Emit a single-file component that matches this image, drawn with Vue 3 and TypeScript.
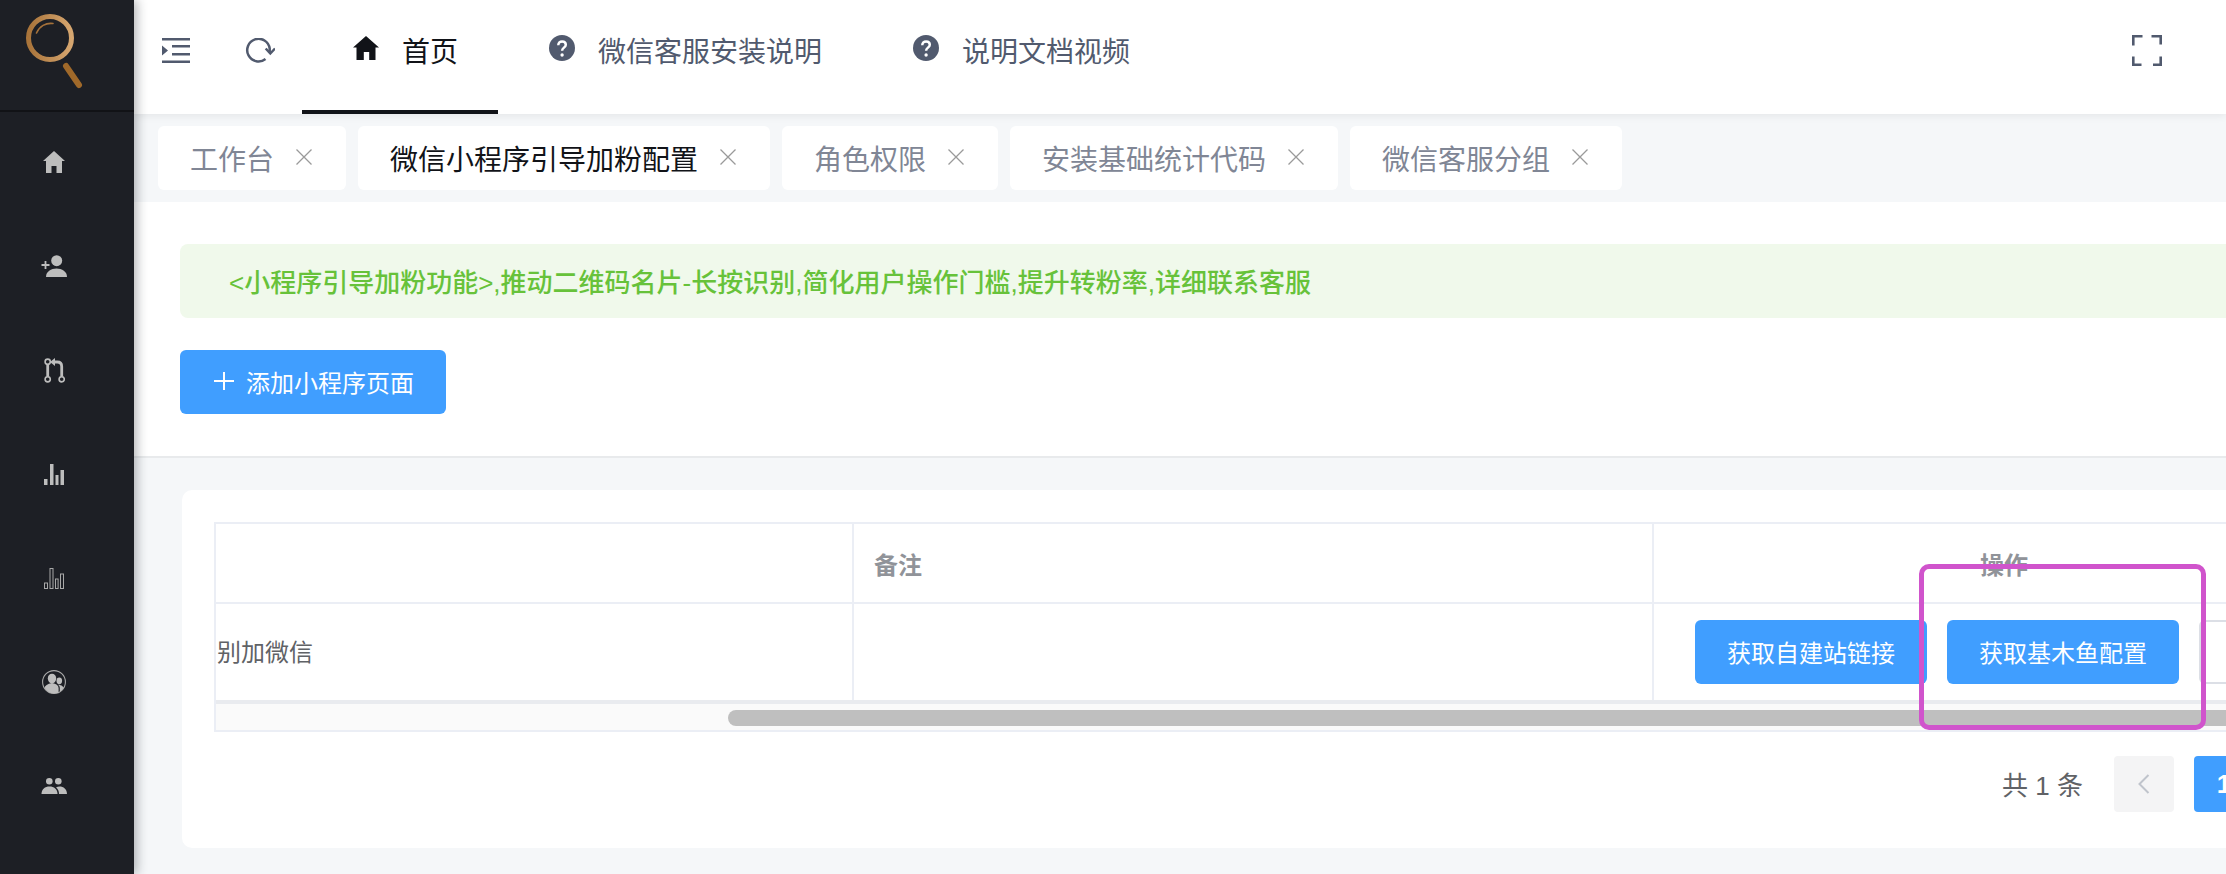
<script setup lang="ts">
interface Tab { label: string; active?: boolean }
const tabs: Tab[] = [
  { label: '工作台' },
  { label: '微信小程序引导加粉配置', active: true },
  { label: '角色权限' },
  { label: '安装基础统计代码' },
  { label: '微信客服分组' },
]
const helpNav: string[] = ['微信客服安装说明', '说明文档视频']
</script>

<template>
  <div class="page">
    <aside class="sidebar">
      <div class="logo">
        <svg width="64" height="80" viewBox="0 0 64 80" fill="none">
          <defs>
            <linearGradient id="ring" x1="0" y1="0" x2="1" y2="0">
              <stop offset="0" stop-color="#a9743a" />
              <stop offset="1" stop-color="#d6a670" />
            </linearGradient>
          </defs>
          <circle cx="28" cy="28" r="21.5" stroke="url(#ring)" stroke-width="5" />
          <path d="M14.5 23A15.5 15.5 0 0 1 31 13.5" stroke="#a5713a" stroke-width="1.6" stroke-linecap="round" />
          <path d="M44 56L57 75" stroke="#a0692a" stroke-width="6" stroke-linecap="round" />
        </svg>
      </div>
      <nav class="menu">
        <div class="menu-item">
          <svg width="22" height="22" viewBox="0 0 22 22"><path class="ic" d="M11 0L22 10h-3v12h-5.500v-7h-5v7H3V10H0z" /></svg>
        </div>
        <div class="menu-item">
          <svg width="26" height="22" viewBox="0 0 26 22">
            <circle class="ic" cx="15.700" cy="5.700" r="5.500" />
            <path class="ic" d="M5 22c0-5.500 5-8.500 10.500-8.500S26 16.500 26 22z" />
            <path d="M.5 10h8M4.500 6v8" stroke="#bdbdbd" stroke-width="1.800" fill="none" />
          </svg>
        </div>
        <div class="menu-item">
          <svg width="21" height="25" viewBox="0 0 21 25" fill="none" stroke="#bdbdbd">
            <circle cx="3.700" cy="3.700" r="2.600" stroke-width="1.600" />
            <circle cx="3.700" cy="21.300" r="2.600" stroke-width="1.600" />
            <circle cx="17.700" cy="21.300" r="2.600" stroke-width="1.600" />
            <path d="M3.700 6.300v12.400" stroke-width="2.800" />
            <path d="M17.700 18.700V8.500q0-4.500-4.500-4.500H10" stroke-width="2.800" />
            <path class="ic" stroke="none" d="M11 0v8L6 4z" />
          </svg>
        </div>
        <div class="menu-item">
          <svg width="20" height="21" viewBox="0 0 20 21">
            <rect class="ic" x="0" y="15" width="3.500" height="6" />
            <rect class="ic" x="6" y="0" width="3.500" height="21" />
            <rect class="ic" x="11.500" y="11" width="3" height="10" />
            <rect class="ic" x="16.500" y="6" width="3.500" height="15" />
          </svg>
        </div>
        <div class="menu-item">
          <svg width="20" height="21" viewBox="0 0 20 21" fill="none" stroke="#a8a8a8" stroke-width="1">
            <rect x=".5" y="15" width="3" height="5.500" />
            <rect x="6" y=".5" width="3" height="20" />
            <rect x="11.500" y="11" width="2.600" height="9.500" />
            <rect x="16.500" y="6" width="3" height="14.500" />
          </svg>
        </div>
        <div class="menu-item">
          <svg width="24" height="24" viewBox="0 0 24 24">
            <circle cx="12" cy="12" r="11.400" fill="none" stroke="#a8a8a8" stroke-width="1.100" />
            <ellipse class="ic" cx="10" cy="8.500" rx="4.200" ry="4.800" />
            <path class="ic" d="M2.600 18q.4-3.700 7.400-5 6.500 1 6.600 5v4.800q-2.200.7-4.600.7-5.800 0-9.400-5.500z" />
            <ellipse class="ic" cx="17.300" cy="10.800" rx="2.800" ry="3.400" />
            <path class="ic" d="M16 14.800q3.600-.4 5.800 2.700-1.500 2.800-4 4.300v-4q0-1.800-1.800-3z" />
          </svg>
        </div>
        <div class="menu-item">
          <svg width="26" height="16" viewBox="0 0 26 16">
            <circle class="ic" cx="8.300" cy="3.300" r="3.300" />
            <circle class="ic" cx="17.300" cy="3.300" r="3.300" />
            <path class="ic" d="M.5 16c0-5 3.500-7.500 8-7.500s8 2.500 8 7.500z" />
            <path class="ic" d="M18 16c0-3-1-5-3-6.500 1-.6 2.300-1 3.500-1 4 0 7.500 2.500 7.500 7.500z" />
          </svg>
        </div>
      </nav>
    </aside>

    <main class="main">
      <header class="topbar">
        <div class="tools">
          <svg width="28" height="25" viewBox="0 0 28 25" class="tool-menu">
            <path class="tool" d="M0 0h28v2.500H0zM10 7h18v2.500H10zM10 15h18v2.500H10zM0 22.500h28V25H0zM0 7.500l6 5-6 5z" />
          </svg>
          <svg width="30" height="25" viewBox="0 0 30 25" fill="none" stroke="#515a6e" stroke-width="2.500" class="tool-refresh">
            <path d="M20.500 21A11.300 11.300 0 1 1 24.700 10.500V15" />
            <path d="M20.700 10.500L25.300 15.500L30 10.500" />
          </svg>
        </div>
        <div class="nav-item active">
          <svg width="26" height="24" viewBox="0 0 26 24" class="nav-home"><path fill="#111318" d="M13 0l13 11.500h-3.500V24h-6.300v-8h-5.400v8H3.500V11.500H0z" /></svg>
          <span>首页</span>
        </div>
        <div v-for="item in helpNav" :key="item" class="nav-item">
          <svg width="26" height="26" viewBox="0 0 26 26" class="nav-help">
            <circle cx="13" cy="13" r="13" fill="#515a6e" />
            <path d="M9.300 10.300c0-2.400 1.600-3.900 3.800-3.900 2.200 0 3.700 1.400 3.700 3.300 0 2.900-3.700 3-3.700 6" fill="none" stroke="#fff" stroke-width="2.500" />
            <circle cx="13.100" cy="20" r="1.700" fill="#fff" />
          </svg>
          <span>{{ item }}</span>
        </div>
        <svg width="30" height="31" viewBox="0 0 30 31" fill="none" stroke="#515a6e" stroke-width="2.600" class="fullscreen">
          <path d="M1.300 10.500V1.300H10.500M19.500 1.300h9.200V9.500M1.300 21.500v8.200H9.500M28.700 21.500v8.200H21" />
        </svg>
      </header>

      <div class="tabs">
        <div v-for="tab in tabs" :key="tab.label" class="tab" :class="{ 'tab-active': tab.active }">
          <span>{{ tab.label }}</span>
          <svg width="16" height="16" viewBox="0 0 16 16" class="tab-close">
            <path d="M.5.500l15 15M15.500.5l-15 15" stroke="#9a9a9a" stroke-width="1.300" fill="none" />
          </svg>
        </div>
      </div>

      <section class="intro">
        <div class="alert">&lt;小程序引导加粉功能&gt;,推动二维码名片-长按识别,简化用户操作门槛,提升转粉率,详细联系客服</div>
        <button class="btn btn-add">
          <svg width="24" height="24" viewBox="0 0 24 24"><path d="M12 3v18M2 12h20" stroke="#fff" stroke-width="2" fill="none" /></svg>
          <span>添加小程序页面</span>
        </button>
      </section>

      <section class="card">
        <div class="table-wrap">
          <table class="table">
            <colgroup>
              <col class="col-a" />
              <col class="col-b" />
              <col class="col-c" />
            </colgroup>
            <thead>
              <tr>
                <th></th>
                <th class="th-note">备注</th>
                <th class="th-op">操作</th>
              </tr>
            </thead>
            <tbody>
              <tr>
                <td class="td-name">别加微信</td>
                <td></td>
                <td class="td-op">
                  <div class="ops">
                    <button class="btn btn-op">获取自建站链接</button>
                    <button class="btn btn-op">获取基木鱼配置</button>
                    <div class="btn-plain"></div>
                  </div>
                </td>
              </tr>
            </tbody>
          </table>
          <div class="scroll-track"><div class="scroll-thumb"></div></div>
        </div>
        <div class="pager">
          <span class="total">共 1 条</span>
          <span class="pg pg-disabled">
            <svg width="12" height="20" viewBox="0 0 12 20"><path d="M10.500 1L1.500 10l9 9" fill="none" stroke="#c0c4cc" stroke-width="2" /></svg>
          </span>
          <span class="pg pg-current">1</span>
          <span class="pg pg-disabled">
            <svg width="12" height="20" viewBox="0 0 12 20"><path d="M1.500 1l9 9-9 9" fill="none" stroke="#c0c4cc" stroke-width="2" /></svg>
          </span>
        </div>
      </section>
    </main>

    <div class="annotation"></div>
  </div>
</template>

<style>
html, body { margin: 0; overflow: hidden; }
</style>

<style scoped>
.page {
  position: relative;
  display: flex;
  width: 2226px;
  height: 874px;
  overflow: hidden;
  background: #f5f7f9;
  font-family: "Liberation Sans", "Noto Sans CJK SC", sans-serif;
}
.sidebar {
  position: relative;
  z-index: 3;
  flex: 0 0 134px;
  background: #1d1f25;
  box-shadow: 3px 0 10px rgba(29, 35, 41, 0.32);
}
.logo {
  box-sizing: border-box;
  height: 110px;
  padding: 10px 0 0 22px;
  box-shadow: 0 2px 0 #111216;
}
.logo svg { display: block; }
.menu { width: 108px; }
.menu-item {
  display: flex;
  align-items: center;
  justify-content: center;
  height: 104px;
}
.ic { fill: #bdbdbd; }
.main {
  flex: 1;
  min-width: 0;
  overflow: hidden;
}
.topbar {
  position: relative;
  z-index: 2;
  box-sizing: border-box;
  display: flex;
  height: 114px;
  background: #fff;
  box-shadow: 0 2px 8px rgba(0, 0, 0, 0.07);
}
.tools {
  display: flex;
  align-items: flex-start;
  flex: 0 0 168px;
  padding: 38px 0 0 28px;
  box-sizing: border-box;
}
.tool { fill: #515a6e; }
.tool-refresh { margin-left: 55px; }
.nav-item {
  box-sizing: border-box;
  display: flex;
  align-items: flex-start;
  height: 114px;
  padding: 0 40px 0 51px;
  color: #515a6e;
  font-size: 28px;
  line-height: 40px;
}
.nav-item span { margin-left: 23px; padding-top: 33px; }
.nav-item.active {
  color: #111318;
  border-bottom: 4px solid #111318;
}
.nav-home { margin-top: 36px; }
.nav-help { margin-top: 35px; }
.fullscreen { margin: 35px 64px 0 auto; }
.tabs {
  box-sizing: border-box;
  display: flex;
  gap: 12px;
  height: 88px;
  padding: 12px 0 0 24px;
  background: #f5f7f9;
}
.tab {
  box-sizing: border-box;
  display: flex;
  align-items: center;
  height: 64px;
  padding: 0 34px 0 32px;
  background: #fff;
  border-radius: 6px;
  color: #808695;
  font-size: 28px;
}
.tab-active { color: #111318; }
.tab-close { margin-left: 22px; margin-top: -2px; }
.intro {
  box-sizing: border-box;
  height: 256px;
  padding: 42px 0 0 46px;
  background: #fff;
  border-bottom: 2px solid #e8eaec;
}
.alert {
  box-sizing: border-box;
  height: 74px;
  padding-left: 49px;
  background: #f0f9eb;
  border-radius: 8px 0 0 8px;
  color: #67c23a;
  font-size: 26px;
  font-weight: 500;
  line-height: 78px;
  white-space: nowrap;
}
.btn {
  box-sizing: border-box;
  height: 64px;
  border: 0;
  border-radius: 6px;
  background: #409eff;
  color: #fff;
  font-family: inherit;
  font-size: 24px;
  padding: 0 32px 2px;
  white-space: nowrap;
}
.btn-add {
  display: flex;
  align-items: center;
  gap: 10px;
  margin-top: 32px;
  padding-left: 32px;
}
.btn-add svg { display: block; }
.card {
  box-sizing: border-box;
  width: 2204px;
  height: 358px;
  margin: 32px 0 0 48px;
  padding: 32px 32px 0;
  background: #fff;
  border-radius: 10px;
}
.table-wrap {
  box-sizing: border-box;
  width: 2140px;
  border: 2px solid #ebeef5;
  border-right: 0;
}
.table {
  table-layout: fixed;
  width: 2138px;
  border-collapse: collapse;
  color: #606266;
  font-size: 24px;
}
.col-a { width: 637px; }
.col-b { width: 800px; }
.col-c { width: 701px; }
.table th {
  height: 78px;
  padding: 0;
  border-bottom: 2px solid #ebeef5;
  color: #909399;
  font-weight: 700;
  text-align: left;
}
.table th + th, .table td + td { border-left: 2px solid #ebeef5; }
.table .th-note { padding-left: 20px; }
.table .th-op { text-align: center; }
.table td {
  height: 96px;
  padding: 0;
  border-bottom: 4px solid #e9ebef;
}
.table .td-name { height: 93px; padding: 0 0 3px 1px; }
.ops {
  display: flex;
  align-items: center;
  gap: 20px;
  padding-left: 41px;
}
.btn-op { width: 232px; flex: 0 0 232px; padding: 0 0 2px; }
.btn-plain {
  box-sizing: border-box;
  flex: 0 0 120px;
  height: 64px;
  border: 2px solid #dcdfe6;
  border-radius: 6px;
  background: #fff;
}
.scroll-track {
  box-sizing: border-box;
  height: 26px;
  padding: 6px 0 0 512px;
  background: #fafafa;
}
.scroll-thumb {
  height: 16px;
  background: #bfbfbf;
  border-radius: 8px;
}
.pager {
  display: flex;
  align-items: center;
  justify-content: flex-end;
  gap: 20px;
  margin-top: 24px;
  padding-right: 20px;
}
.total {
  margin: 0 11px 2px 0;
  color: #606266;
  font-size: 26px;
  white-space: nowrap;
}
.pg {
  display: flex;
  align-items: center;
  justify-content: center;
  width: 60px;
  height: 56px;
  border-radius: 4px;
  background: #f4f4f5;
  font-size: 26px;
  font-weight: 700;
}
.pg-current { background: #409eff; color: #fff; }
.annotation {
  position: absolute;
  z-index: 4;
  left: 1919px;
  top: 564px;
  width: 287px;
  height: 166px;
  box-sizing: border-box;
  border: 5px solid #d054cc;
  border-radius: 10px;
}
</style>
